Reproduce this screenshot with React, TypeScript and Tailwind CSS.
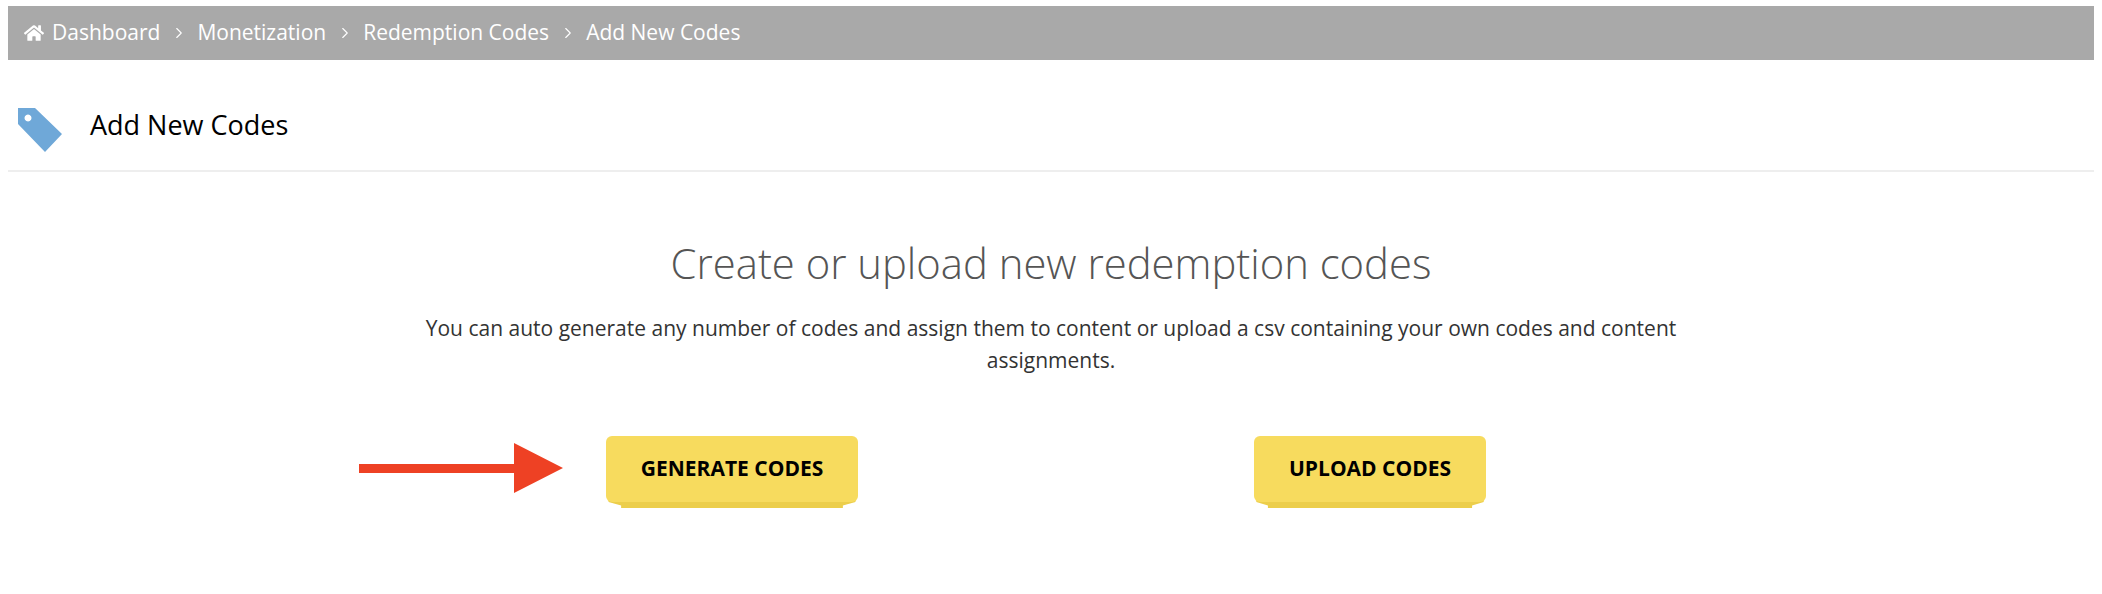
import { ChevronRight } from "lucide-react";
import { FaHome } from "react-icons/fa";

const crumbs = ["Dashboard", "Monetization", "Redemption Codes", "Add New Codes"];

function TagIcon() {
  return (
    <svg width="46" height="46" viewBox="0 0 46 46" className="mt-[10px] shrink-0">
      <path
        fillRule="evenodd"
        fill="#6fa8d8"
        d="M1 1H18L45 27L28 45L1 17ZM11 7.5a3.5 3.5 0 1 0 0.01 0Z"
      />
    </svg>
  );
}

function CodeButton({ label, width }: { label: string; width: string }) {
  return (
    <button className={`relative h-[72px] ${width} pb-1.5 text-[21px] font-bold uppercase text-black`}>
      <span className="absolute inset-x-0 bottom-0 h-2 bg-[#ecce4b] [clip-path:polygon(1%_0,99%_0,99%_25%,94%_70%,94%_100%,6%_100%,6%_70%,1%_25%)]" />
      <span className="relative flex h-full items-center justify-center rounded-md bg-[#f7db5e]">{label}</span>
    </button>
  );
}

export default function App() {
  return (
    <div className="relative h-[594px] bg-white px-2 pt-1.5 font-['Open_Sans',sans-serif]">
      <nav className="flex h-[54px] items-center bg-[#a9a9a9] pl-4 text-[21px] text-white">
        <FaHome className="mr-[8px] h-[18px] w-[20px]" />
        {crumbs.map((crumb, i) => (
          <div key={crumb} className="flex items-center">
            {i > 0 && <ChevronRight className="mx-[9.5px] h-[18px] w-[18px]" strokeWidth={1.5} />}
            <span>{crumb}</span>
          </div>
        ))}
      </nav>

      <header className="flex h-[112px] items-center gap-[27px] border-b-2 border-[#eeeeee] pl-[9px] pt-5">
        <TagIcon />
        <h1 className="text-[27px] text-black">Add New Codes</h1>
      </header>

      <main className="pt-[63px] text-center">
        <h2 className="text-[41.8px] font-light leading-[56px] text-[#555555]">Create or upload new redemption codes</h2>
        <p className="mx-auto mt-[21px] w-[1270px] text-[21px] leading-[32px] text-[#333333]">
          You can auto generate any number of codes and assign them to content or upload a csv containing your own codes
          and content assignments.
        </p>
        <div className="mx-auto mt-[60px] grid w-[1276px] grid-cols-2">
          <div className="flex justify-center">
            <CodeButton label="Generate Codes" width="w-[252px]" />
          </div>
          <div className="flex justify-center">
            <CodeButton label="Upload Codes" width="w-[232px]" />
          </div>
        </div>
      </main>

      <svg width="206" height="50" viewBox="0 0 206 50" className="absolute left-[359px] top-[443px]">
        <path fill="#ee4124" d="M0 21H155V0L204 25L155 50V30H0Z" />
      </svg>
    </div>
  );
}
